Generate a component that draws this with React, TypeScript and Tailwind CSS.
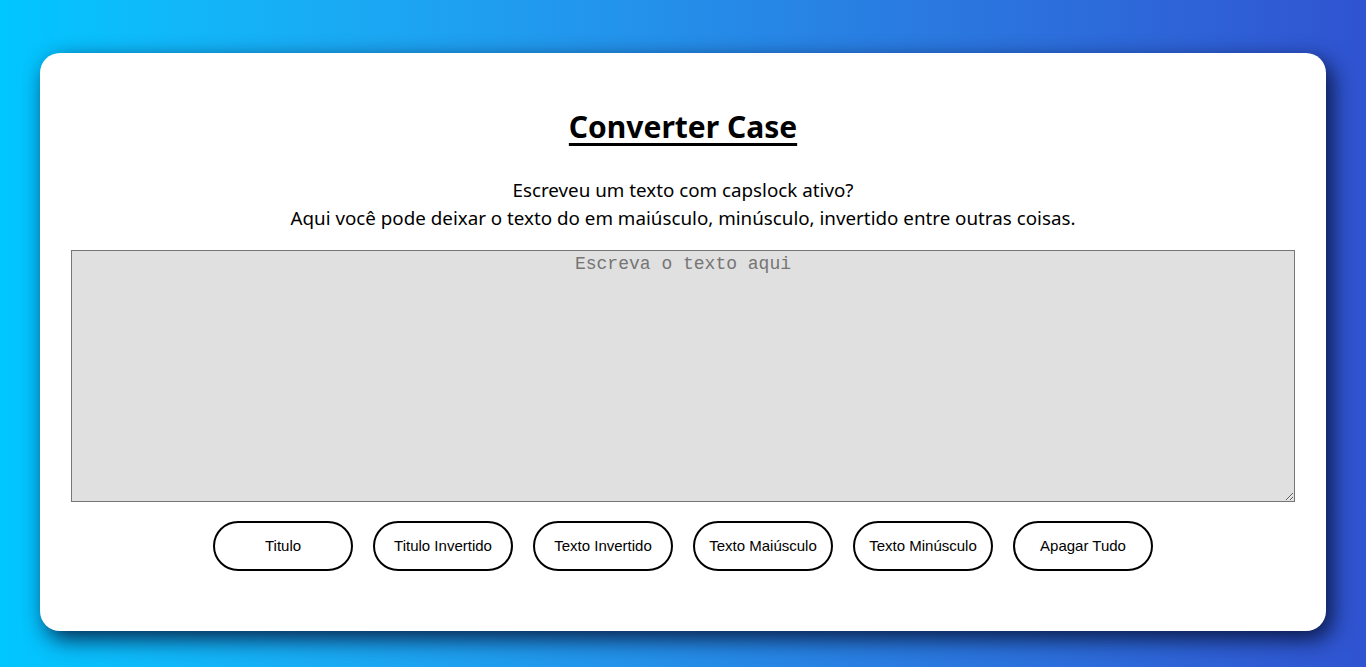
import React, { useState } from 'react';

const buttons = ['Titulo', 'Titulo Invertido', 'Texto Invertido', 'Texto Maiúsculo', 'Texto Minúsculo', 'Apagar Tudo'];

const App: React.FC = () => {
  const [text, setText] = useState('');

  return (
    <div className="min-h-[667px] w-full bg-gradient-to-r from-[#00c6ff] to-[#3053d1] px-10 pt-[53px] pb-9 font-['Noto_Sans',sans-serif]">
      <div className="flex h-[578px] flex-col items-center rounded-[20px] bg-white px-[31px] pt-[52px] shadow-[6px_8px_22px_rgba(5,12,45,0.85)]">
        <h1 className="text-[30px] font-bold leading-[44px] text-black underline decoration-[3px] underline-offset-[5px]">
          Converter Case
        </h1>
        <p className="mt-[27px] text-center text-[18.8px] leading-[28px] text-black">
          Escreveu um texto com capslock ativo?
          <br />
          Aqui você pode deixar o texto do em maiúsculo, minúsculo, invertido entre outras coisas.
        </p>
        <textarea
          value={text}
          onChange={(e) => setText(e.target.value)}
          placeholder="Escreva o texto aqui"
          className="mt-[18px] h-[252px] w-full resize-y border border-[#767676] bg-[#e0e0e0] px-2 py-0 text-center font-['Liberation_Mono',monospace] text-[18px] text-black placeholder:text-[#757575] focus:outline-none"
        />
        <div className="mt-[19px] flex gap-5">
          {buttons.map((b) => (
            <button
              key={b}
              className="h-[50px] w-[140px] rounded-full border-2 border-black bg-white font-['Liberation_Sans',Arial,sans-serif] text-[15px] text-black"
            >
              {b}
            </button>
          ))}
        </div>
      </div>
    </div>
  );
};

export default App;
